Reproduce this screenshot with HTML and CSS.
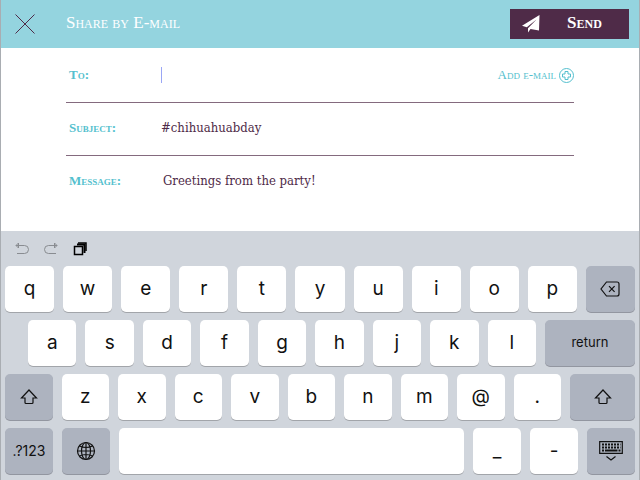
FILE: index.html
```html
<!DOCTYPE html>
<html lang="en">
<head>
    <meta charset="UTF-8">
    <meta name="viewport" content="width=device-width, initial-scale=1.0">
    <title>Share by E-mail</title>
    <link rel="stylesheet" href="styles.css">
</head>
<body>
    <header>
        <button class="close" aria-label="Close">
            <svg width="20" height="20" viewBox="0 0 20 20"><path d="M0.5 0.5l19 19M19.5 0.5l-19 19"/></svg>
        </button>
        <h1>Share by E-mail</h1>
        <button class="send">
            <svg width="18" height="18" viewBox="0 0 18 18"><path d="M17.500 0L0 10.800l4.800 1.500L14.500 4.500 6 13.200V17.500l2.500-3.400 8.500 1.400z"/></svg>
            <span>Send</span>
        </button>
    </header>

    <form class="mail-form">
        <div class="row">
            <label for="to">To:</label>
            <span class="caret"></span>
            <input type="email" id="to">
            <button type="button" class="add-mail">
                Add e-mail
                <svg width="15" height="15" viewBox="0 0 15 15"><circle cx="7.5" cy="7.5" r="7"/><path d="M6 3.500h3V6h2.500v3H9v2.500H6V9H3.500V6H6z"/></svg>
            </button>
        </div>
        <div class="row">
            <label for="subject">Subject:</label>
            <input type="text" id="subject" value="#chihuahuabday">
        </div>
        <div class="row">
            <label for="message">Message:</label>
            <textarea id="message" rows="1">Greetings from the party!</textarea>
        </div>
    </form>

    <div class="keyboard">
        <div class="tools">
            <button aria-label="Undo"><svg width="14" height="14" viewBox="0 0 14 14"><path d="M1 3.500h8.500a3.800 3.800 0 0 1 0 8H2M3.500 1L1 3.500 3.500 6z"/></svg></button>
            <button aria-label="Redo"><svg width="14" height="14" viewBox="0 0 14 14"><path d="M13 3.500H4.500a3.800 3.800 0 0 0 0 8H12M10.500 1L13 3.500 10.500 6z"/></svg></button>
            <button aria-label="Paste" class="paste"><svg width="14" height="14" viewBox="0 0 14 14"><path d="M1.500 4.500h8v8h-8z"/><path class="thick" d="M4 2.500h7.500V11"/><path d="M5 1h8V9"/></svg></button>
        </div>
        <div class="keys">
            <button>q</button>
            <button>w</button>
            <button>e</button>
            <button>r</button>
            <button>t</button>
            <button>y</button>
            <button>u</button>
            <button>i</button>
            <button>o</button>
            <button>p</button>
            <button class="dark" aria-label="Delete"><svg width="20" height="16" viewBox="0 0 20 16"><path d="M6.500 1H17a2 2 0 0 1 2 2v10a2 2 0 0 1-2 2H6.500L1 8zM9 5.200l5.600 5.600M14.600 5.200L9 10.800"/></svg></button>
        </div>
        <div class="keys keys-home">
            <button>a</button>
            <button>s</button>
            <button>d</button>
            <button>f</button>
            <button>g</button>
            <button>h</button>
            <button>j</button>
            <button>k</button>
            <button>l</button>
            <button class="dark return">return</button>
        </div>
        <div class="keys">
            <button class="dark" aria-label="Shift"><svg width="18" height="16" viewBox="0 0 18 16"><path d="M9 1l7.500 8H13v4.500a1 1 0 0 1-1 1H6a1 1 0 0 1-1-1V9H1.500z"/></svg></button>
            <button>z</button>
            <button>x</button>
            <button>c</button>
            <button>v</button>
            <button>b</button>
            <button>n</button>
            <button>m</button>
            <button>@</button>
            <button>.</button>
            <button class="dark shift-right" aria-label="Shift"><svg width="18" height="16" viewBox="0 0 18 16"><path d="M9 1l7.500 8H13v4.500a1 1 0 0 1-1 1H6a1 1 0 0 1-1-1V9H1.500z"/></svg></button>
        </div>
        <div class="keys keys-bottom">
            <button class="dark numbers">.?123</button>
            <button class="dark" aria-label="Language"><svg width="20" height="20" viewBox="0 0 20 20"><circle cx="10" cy="10" r="8.500"/><ellipse cx="10" cy="10" rx="4.500" ry="8.500"/><path d="M10 1.500v17M1.500 10h17M3.500 5Q10 8 16.500 5M3.500 15Q10 12 16.500 15"/></svg></button>
            <button class="space" aria-label="Space"></button>
            <button>_</button>
            <button>-</button>
            <button class="dark" aria-label="Hide keyboard"><svg width="24" height="20" viewBox="0 0 24 20"><path d="M.7.7h22.600v11.600H.7zM7.500 15.500l4.500 3.500 4.500-3.500"/><path class="dots" d="M3 3.500h18.500M3 6.500h18.500"/><path class="dots" d="M3 9.500h2M19.500 9.500h2"/><path class="thick" d="M6 9.500h12.500"/></svg></button>
        </div>
    </div>
</body>
</html>
```
FILE: styles.css
```css
* {
    box-sizing: border-box;
}
body {
    margin: 0;
    min-height: 100vh;
    display: flex;
    flex-direction: column;
    background: white;
    border-left: 1px solid #a9adb2;
    border-right: 1px solid #a9adb2;
    font-family: Inter, sans-serif;
}
button {
    border: none;
    padding: 0;
    background: none;
    font: inherit;
    color: inherit;
    cursor: pointer;
}
svg {
    display: block;
    fill: none;
    stroke: currentColor;
}
header,
label,
.add-mail {
    font-family: "Liberation Serif", serif;
    font-variant: small-caps;
}
header {
    display: flex;
    align-items: center;
    height: 48px;
    padding: 0 10px 0 14px;
    background: #94d4df;
    color: white;
}
.close {
    width: 20px;
    color: #4f2b48;
}
h1 {
    flex: 1;
    margin: 0 0 0 31px;
    padding-bottom: 2px;
    font-size: 17px;
    line-height: 24px;
    font-weight: normal;
}
.send {
    display: flex;
    align-items: center;
    width: 119px;
    height: 30px;
    padding-left: 12px;
    background: #4f2b48;
    font-family: "Liberation Serif", serif;
    font-variant: small-caps;
    font-size: 17px;
    font-weight: bold;
}
.send svg {
    fill: white;
    stroke: none;
}
.send span {
    flex: 1;
    padding: 0 0 2px;
}

/* form */
.mail-form {
    flex: 1;
    padding: 2px 65px 0;
}
.row {
    display: flex;
    align-items: center;
    height: 53px;
    padding-bottom: 2px;
    border-bottom: 1px solid #846a7e;
}
.row:last-child {
    border-color: transparent;
}
label {
    width: 95px;
    padding-left: 3px;
    font-size: 13px;
    font-weight: bold;
    color: #54bfce;
}
.caret {
    width: 1px;
    height: 16px;
    background: #9aa6f5;
}
input,
textarea {
    flex: 1;
    min-width: 0;
    border: none;
    outline: none;
    padding: 0;
    background: none;
    font-family: Georgia, "DejaVu Serif Condensed", "DejaVu Serif", serif;
    font-size: 13px;
    line-height: 20px;
    color: #4f2b48;
}
textarea {
    height: 20px;
    padding: 0 2px;
    resize: none;
    overflow: hidden;
}
.add-mail {
    display: flex;
    align-items: center;
    gap: 3px;
    font-family: "Liberation Serif", serif;
    font-variant: small-caps;
    font-size: 13px;
    color: #54bfce;
}

/* keyboard */
.keyboard {
    display: flex;
    flex-direction: column;
    gap: 8px;
    padding: 0 4px 6px;
    background: #d0d5dc;
}
.tools {
    display: flex;
    align-items: center;
    gap: 15px;
    height: 27px;
    padding: 9px 0 0 10px;
    color: #898c91;
}
.tools .paste {
    color: black;
}
.paste svg {
    stroke-width: 1.5;
}
.keys {
    display: flex;
    gap: 9px;
}
.keys-home {
    padding-left: 23px;
}
.keys button {
    display: flex;
    align-items: center;
    justify-content: center;
    flex: 1 1 0;
    height: 46px;
    padding-bottom: 2px;
    border-radius: 5px;
    background: white;
    box-shadow: 0 1px 0 #a2a5aa;
    font-size: 19px;
    color: #111;
}
.keys .dark {
    padding-bottom: 0;
    background: #adb3bf;
    box-shadow: 0 1px 0 #9296a0;
}
.keys .dark svg {
    stroke-width: 1.2;
}
.keys .return {
    flex: 0 0 90px;
    padding-bottom: 2px;
    font-size: 13px;
}
.keys .shift-right {
    flex: 0 0 65px;
}
.keys-bottom button {
    flex: 0 0 48px;
}
.keys .numbers {
    padding-bottom: 2px;
    font-size: 14px;
}
.keys .space {
    flex: 1;
}
.keys .dark .dots {
    stroke-width: 2;
    stroke-dasharray: 2 1;
}
.thick {
    stroke-width: 2;
}
```
